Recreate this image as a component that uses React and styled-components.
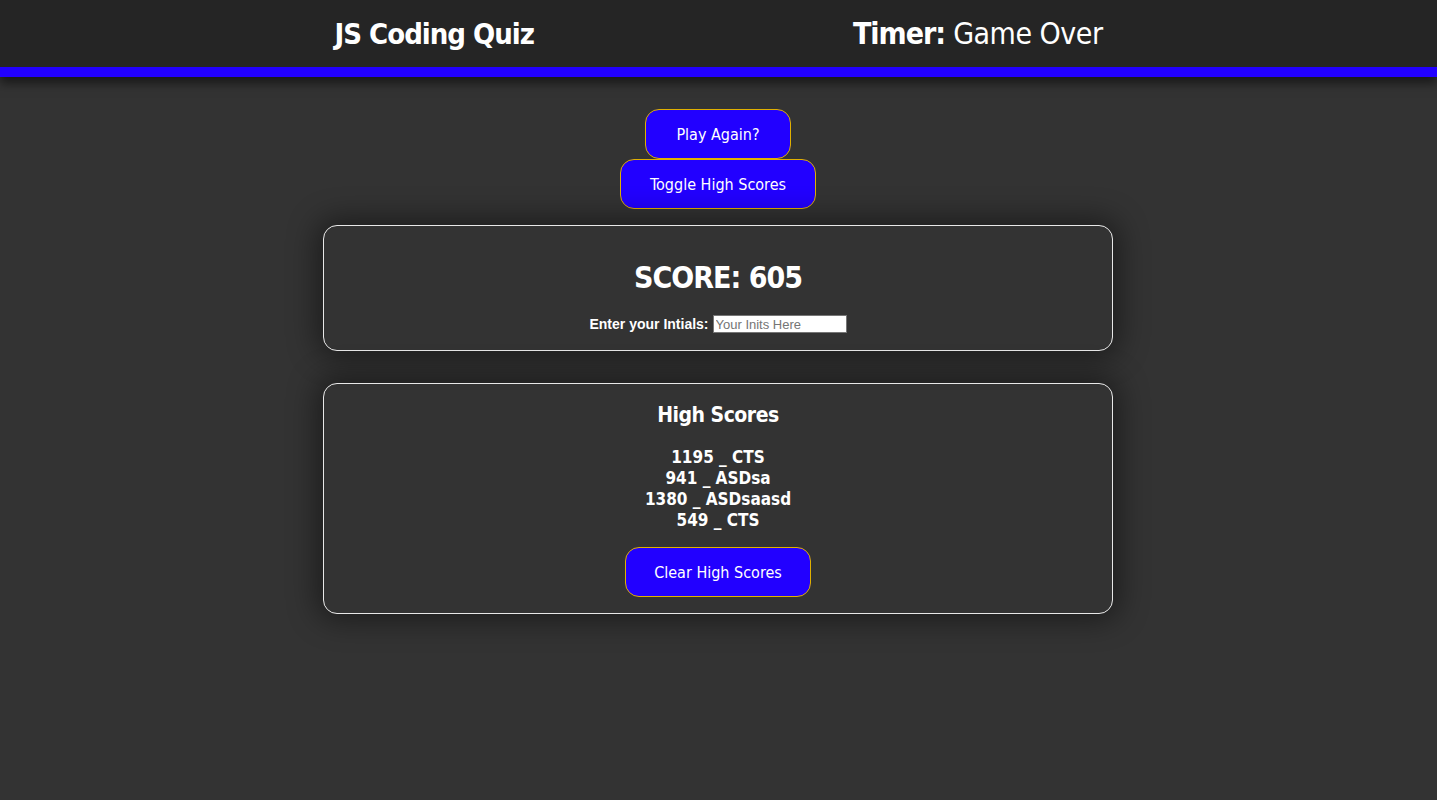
import React, { useState } from "react";
import styled, { createGlobalStyle } from "styled-components";

const GlobalStyle = createGlobalStyle`
  html, body {
    margin: 0;
    padding: 0;
    background-color: #333333;
    color: #ffffff;
    font-family: "DejaVu Sans Condensed", "Liberation Sans", Arial, sans-serif;
  }
  body {
    min-height: 800px;
  }
`;

const Header = styled.header`
  background-color: #252525;
  border-bottom: 10px solid #2200ff;
  box-shadow: 0 6px 10px rgba(0, 0, 0, 0.55);
  height: 67px;
`;

const HeaderInner = styled.div`
  width: 790px;
  margin: 0 auto;
  padding: 0 11px;
  box-sizing: border-box;
  height: 100%;
  display: flex;
  align-items: center;
  justify-content: space-between;
`;

const Brand = styled.h1`
  margin: 0;
  font-size: 29px;
  font-weight: bold;
  letter-spacing: -1px;
`;

const Timer = styled.div`
  font-size: 30px;
  font-weight: normal;
  letter-spacing: -0.5px;
  span {
    font-weight: bold;
    letter-spacing: -1px;
  }
`;

const Main = styled.main`
  display: flex;
  flex-direction: column;
  align-items: center;
  padding-top: 32px;
  padding-right: 1px;
`;

const Button = styled.button`
  background-color: #2200ff;
  color: #ffffff;
  border: 1px solid #e0b000;
  border-radius: 14px;
  height: 50px;
  width: ${(p) => p.$w}px;
  padding: 0;
  font-family: inherit;
  font-size: 16px;
  cursor: pointer;
`;

const Card = styled.section`
  width: 790px;
  box-sizing: border-box;
  border: 1px solid #e8e8e8;
  border-radius: 14px;
  box-shadow: 0 0 30px 6px rgba(0, 0, 0, 0.45);
  display: flex;
  flex-direction: column;
  align-items: center;
  padding: ${(p) => p.$pad};
  margin-top: ${(p) => p.$top}px;
`;

const Score = styled.h2`
  margin: 0;
  font-size: 30px;
  font-weight: bold;
  letter-spacing: -1px;
`;

const InitsRow = styled.label`
  margin-top: 20px;
  font-family: "Liberation Sans", Arial, sans-serif;
  font-size: 14px;
  font-weight: bold;
  display: flex;
  align-items: center;
  gap: 4px;
`;

const InitsInput = styled.input`
  width: 134px;
  height: 18px;
  box-sizing: border-box;
  border: 1px solid #767676;
  padding: 1px 2px;
  font-family: "Liberation Sans", Arial, sans-serif;
  font-size: 13px;
  &::placeholder {
    color: #757575;
  }
`;

const ListTitle = styled.h3`
  margin: 0;
  font-size: 21px;
  font-weight: bold;
  letter-spacing: -0.5px;
`;

const ScoreList = styled.ol`
  list-style: none;
  margin: 20px 0 16px;
  padding: 0;
  text-align: center;
  font-size: 17px;
  font-weight: bold;
  line-height: 21px;
`;

const scores = [
  { pts: 1195, name: "CTS" },
  { pts: 941, name: "ASDsa" },
  { pts: 1380, name: "ASDsaasd" },
  { pts: 549, name: "CTS" },
];

export default function App() {
  const [showScores, setShowScores] = useState(true);
  const [inits, setInits] = useState("");

  return (
    <>
      <GlobalStyle />
      <Header>
        <HeaderInner>
          <Brand>JS Coding Quiz</Brand>
          <Timer>
            <span>Timer:</span> Game Over
          </Timer>
        </HeaderInner>
      </Header>
      <Main>
        <Button $w={146}>Play Again?</Button>
        <Button $w={196} onClick={() => setShowScores(!showScores)}>
          Toggle High Scores
        </Button>
        <Card $pad="34px 0 17px" $top={16}>
          <Score>SCORE: 605</Score>
          <InitsRow>
            Enter your Intials:
            <InitsInput
              placeholder="Your Inits Here"
              value={inits}
              onChange={(e) => setInits(e.target.value)}
            />
          </InitsRow>
        </Card>
        {showScores && (
          <Card $pad="19px 0 16px" $top={32}>
            <ListTitle>High Scores</ListTitle>
            <ScoreList>
              {scores.map((s, i) => (
                <li key={i}>
                  {s.pts} _ {s.name}
                </li>
              ))}
            </ScoreList>
            <Button $w={186}>Clear High Scores</Button>
          </Card>
        )}
      </Main>
    </>
  );
}
